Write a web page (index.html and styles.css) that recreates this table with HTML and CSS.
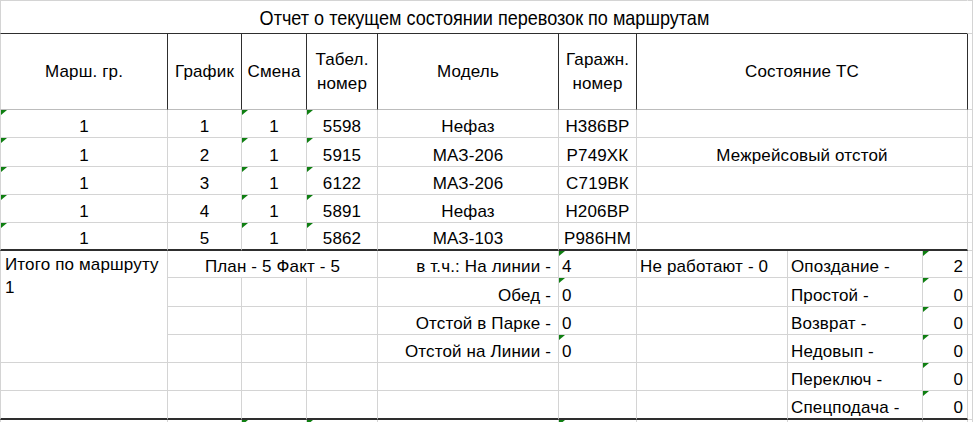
FILE: index.html
```html
<!DOCTYPE html>
<html lang="ru">
<head>
<meta charset="utf-8">
<title>Отчет о текущем состоянии перевозок по маршрутам</title>
<link rel="stylesheet" href="styles.css">
</head>
<body>
<div class="sheet">
  <!-- title row -->
  <div class="c top first title dk-b dk-t span-ai"><span class="title-text">Отчет о текущем состоянии перевозок по маршрутам</span></div>
  <div class="c top"></div>

  <!-- header row -->
  <div class="c first hd">Марш. гр.</div>
  <div class="c hd">График</div>
  <div class="c hd">Смена</div>
  <div class="c hd two">Табел.<br>номер</div>
  <div class="c hd">Модель</div>
  <div class="c hd two">Гаражн.<br>номер</div>
  <div class="c hd span-gi">Состояние ТС</div>
  <div class="c"></div>

  <!-- data rows -->
  <div class="c first d err">1</div><div class="c d">1</div><div class="c d err">1</div><div class="c d err">5598</div><div class="c d">Нефаз</div><div class="c d">Н386ВР</div><div class="c d span-gi"></div><div class="c"></div>
  <div class="c first d err">1</div><div class="c d">2</div><div class="c d err">1</div><div class="c d err">5915</div><div class="c d">МАЗ-206</div><div class="c d">Р749ХК</div><div class="c d span-gi">Межрейсовый отстой</div><div class="c"></div>
  <div class="c first d err">1</div><div class="c d">3</div><div class="c d err">1</div><div class="c d err">6122</div><div class="c d">МАЗ-206</div><div class="c d">С719ВК</div><div class="c d span-gi"></div><div class="c"></div>
  <div class="c first d err">1</div><div class="c d">4</div><div class="c d err">1</div><div class="c d err">5891</div><div class="c d">Нефаз</div><div class="c d">Н206ВР</div><div class="c d span-gi"></div><div class="c"></div>
  <div class="c first d err tb">1</div><div class="c d tb">5</div><div class="c d err tb">1</div><div class="c d err tb">5862</div><div class="c d tb">МАЗ-103</div><div class="c d tb">Р986НМ</div><div class="c d span-gi tb"></div><div class="c"></div>

  <!-- summary rows -->
  <div class="c first total">Итого по маршруту 1</div>
  <div class="c d span-bd">План - 5 Факт - 5</div>
  <div class="c d r">в т.ч.: На линии -</div>
  <div class="c d l err">4</div>
  <div class="c d l">Не работают - 0</div>
  <div class="c d l">Опоздание -</div>
  <div class="c d rr err">2</div>
  <div class="c"></div>

  <div class="c"></div><div class="c"></div><div class="c"></div>
  <div class="c d r">Обед -</div>
  <div class="c d l err">0</div>
  <div class="c"></div>
  <div class="c d l">Простой -</div>
  <div class="c d rr err">0</div>
  <div class="c"></div>

  <div class="c"></div><div class="c"></div><div class="c"></div>
  <div class="c d r">Отстой в Парке -</div>
  <div class="c d l">0</div>
  <div class="c"></div>
  <div class="c d l">Возврат -</div>
  <div class="c d rr err">0</div>
  <div class="c"></div>

  <div class="c"></div><div class="c"></div><div class="c"></div>
  <div class="c d r">Отстой на Линии -</div>
  <div class="c d l err">0</div>
  <div class="c"></div>
  <div class="c d l">Недовып -</div>
  <div class="c d rr err">0</div>
  <div class="c"></div>

  <div class="c first"></div><div class="c"></div><div class="c"></div><div class="c"></div><div class="c"></div><div class="c"></div><div class="c"></div>
  <div class="c d l">Переключ -</div>
  <div class="c d rr err">0</div>
  <div class="c"></div>

  <div class="c first tb"></div><div class="c tb"></div><div class="c tb"></div><div class="c tb"></div><div class="c tb"></div><div class="c tb"></div><div class="c tb"></div>
  <div class="c d l tb">Спецподача -</div>
  <div class="c d rr err tb">0</div>
  <div class="c"></div>

  <!-- partially visible next row -->
  <div class="c first"></div><div class="c"></div><div class="c err"></div><div class="c err"></div><div class="c"></div><div class="c err"></div><div class="c"></div><div class="c"></div><div class="c"></div><div class="c"></div>
</div>
</body>
</html>
```

FILE: styles.css
```css
html, body {
  margin: 0;
  padding: 0;
  background: #ffffff;
}

body {
  font-family: "Liberation Sans", Arial, sans-serif;
  font-size: 17px;
  letter-spacing: 0.15px;
  color: #000000;
  overflow: hidden;
}

.sheet {
  display: grid;
  grid-template-columns: 168px 74px 65px 71px 181px 78px 151px 135px 45px 5px;
  grid-template-rows: 34px 76px 28px 29px 28px 28px 28px 27px 29px 28px 28px 28px 29px 10px;
  width: 973px;
}

.c {
  box-sizing: border-box;
  border-right: 1px solid #d4d4d4;
  border-bottom: 1px solid #d4d4d4;
  position: relative;
  display: flex;
  line-height: 18px;
  white-space: nowrap;
  min-width: 0;
}

.c.first { border-left: 1px solid #d4d4d4; }
.c.top { border-top: 1px solid #d4d4d4; }

.span-ai { grid-column: 1 / 10; }
.span-gi { grid-column: 7 / 10; }
.span-bd { grid-column: 2 / 5; }

.title {
  justify-content: center;
  align-items: flex-end;
  padding-bottom: 3px;
  border-right-color: transparent;
}
.dk-t { border-top: 1px solid #2e2e2e; }
.dk-b { border-bottom: 1px solid #2e2e2e; }

.title-text {
  font-size: 21px;
  letter-spacing: 0;
  line-height: 24px;
  display: inline-block;
  transform: scaleX(0.86);
  transform-origin: center;
}

.hd {
  justify-content: center;
  align-items: center;
  text-align: center;
  border-right-color: #2e2e2e;
  border-bottom-color: #bcbcbc;
}
.hd.two { line-height: 24px; }

.d {
  justify-content: center;
  align-items: flex-end;
  padding-bottom: 1px;
}
.d.r { justify-content: flex-end; padding-right: 7px; }
.d.l { justify-content: flex-start; padding-left: 3px; }
.d.rr { justify-content: flex-end; padding-right: 4px; }

.tb { border-bottom: 2px solid #2e2e2e; }

.total {
  grid-row: span 4;
  white-space: normal;
  align-items: flex-start;
  padding: 2px 4px 0 4px;
  line-height: 23px;
}

.err::before {
  content: "";
  position: absolute;
  top: 0;
  left: 0;
  width: 0;
  height: 0;
  border-top: 5px solid #0f7f12;
  border-right: 6px solid transparent;
}
```
